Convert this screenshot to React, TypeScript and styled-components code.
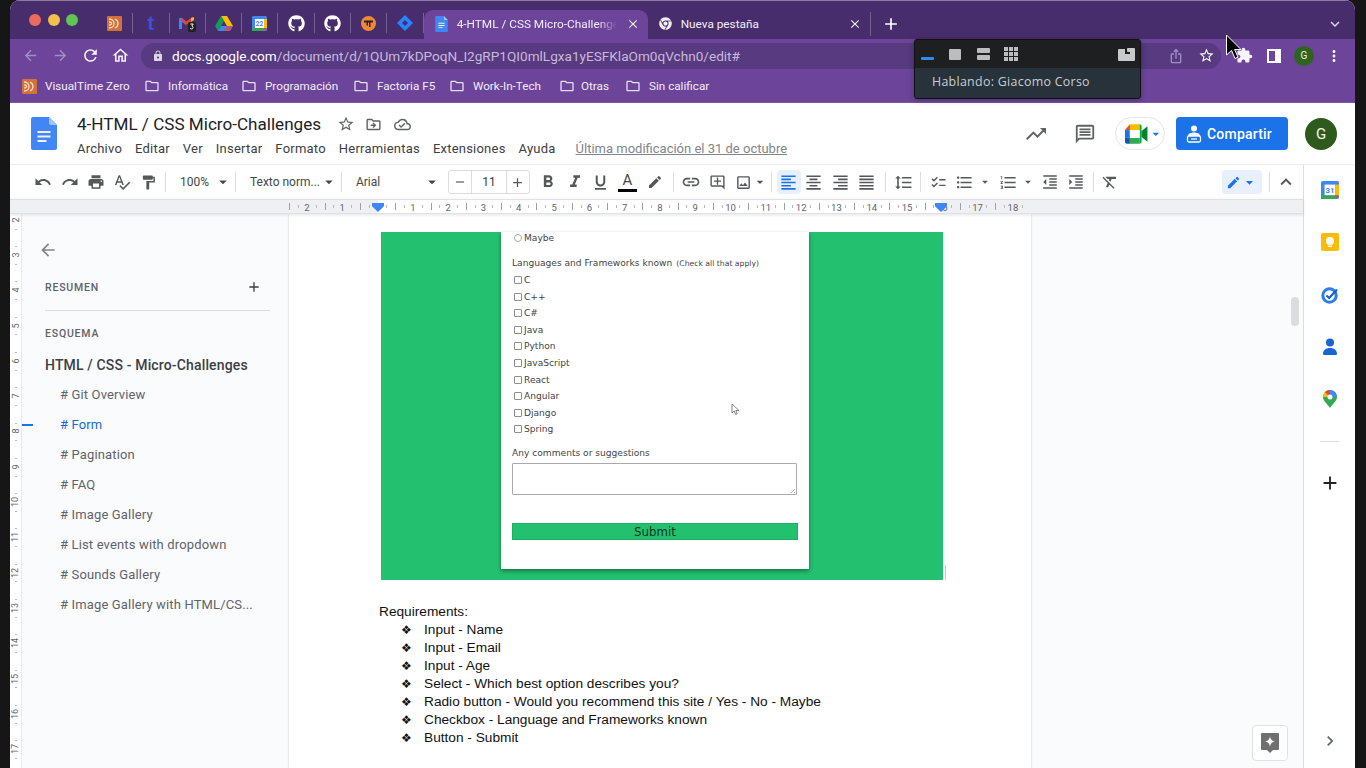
import React from "react";
import styled, { createGlobalStyle } from "styled-components";
import { FaChrome, FaGithub } from "react-icons/fa";
import {
  MdAdd, MdOutlineAddComment, MdArrowBack, MdArrowDropDown, MdArrowForward, MdChecklist, MdChevronRight, MdClose,
  MdEdit, MdExtension, MdFormatAlignCenter, MdFormatAlignJustify, MdFormatAlignLeft, MdFormatAlignRight,
  MdFormatBold, MdFormatClear, MdFormatIndentDecrease, MdFormatIndentIncrease, MdFormatItalic,
  MdFormatLineSpacing, MdFormatListBulleted, MdFormatListNumbered, MdFormatPaint, MdFormatUnderlined,
  MdKeyboardArrowDown, MdKeyboardArrowUp, MdLink, MdLock, MdMoreVert, MdOutlineCloudDone,
  MdOutlineDriveFileMove, MdOutlineFolder, MdOutlineHome, MdOutlineImage, MdOutlineMessage, MdPrint,
  MdRedo, MdRefresh, MdRemove, MdTrendingUp, MdSpellcheck, MdStarBorder, MdUndo, MdIosShare,
} from "react-icons/md";

const GlobalStyle = createGlobalStyle`
  html, body { margin: 0; padding: 0; background: #161616; overflow: hidden; }
  * { box-sizing: border-box; }
`;

const UI_FONT = `Roboto, "Liberation Sans", sans-serif`;
const FORM_FONT = `"DejaVu Sans", sans-serif`;
const DOC_FONT = `"Liberation Sans", Arial, sans-serif`;
const ICON_GREY = "#555759";

const Shell = styled.div`
  position: relative;
  width: 1366px;
  height: 768px;
  padding: 0 11px 0 10px;
  overflow: hidden;
  background: #161616;
  font-family: ${UI_FONT};
`;

const Window = styled.div`
  display: flex;
  flex-direction: column;
  height: 768px;
  overflow: hidden;
  background: #fff;
  border-radius: 10px 10px 0 0;
`;

const TabStrip = styled.div`
  display: flex;
  align-items: flex-end;
  flex: none;
  height: 39px;
  background: #482d6c;
  border-top: 1px solid #8d7aa5;
  color: #fff;
`;

const Lights = styled.div`
  display: flex;
  gap: 6.5px;
  align-self: flex-start;
  width: 87px;
  padding: 13px 0 0 19px;
`;

const Light = styled.span<{ $color: string }>`
  width: 12px;
  height: 12px;
  border-radius: 50%;
  background: ${(p) => p.$color};
`;

const Pinned = styled.div`
  display: flex;
  align-items: center;
  justify-content: center;
  align-self: flex-start;
  width: 36.3px;
  height: 20px;
  margin-top: 12px;
  border-right: 1px solid #75608f;
  &:last-of-type { border-right: none; }
`;

const Tab = styled.div<{ $active?: boolean; $w: number }>`
  display: flex;
  align-items: center;
  gap: 9px;
  flex: none;
  width: ${(p) => p.$w}px;
  height: 29px;
  padding: 0 8px 2px 11px;
  border-radius: 9px 9px 0 0;
  background: ${(p) => (p.$active ? "#6c459b" : "transparent")};
  font-size: 11.8px;
  color: #f1edf6;
`;

const TabTitle = styled.span<{ $fade?: boolean }>`
  flex: 1;
  overflow: hidden;
  white-space: nowrap;
  ${(p) => p.$fade && "mask-image: linear-gradient(to right, #000 88%, transparent);"}
`;

const NewTab = styled.div`
  display: flex;
  align-items: center;
  justify-content: center;
  width: 42px;
  height: 24px;
  margin-bottom: 3px;
  border-left: 1px solid #75608f;
`;

const StripEnd = styled.div`
  display: flex;
  align-items: center;
  justify-content: flex-end;
  flex: 1;
  height: 29px;
  padding: 0 11px 2px 0;
  color: #ddd6e6;
`;

const NavBar = styled.div`
  display: flex;
  align-items: center;
  flex: none;
  height: 33px;
  padding-left: 5px;
  background: #6c459b;
  color: #f2eef7;
`;

const NavBtn = styled.div<{ $dim?: boolean; $w?: number }>`
  display: flex;
  align-items: center;
  justify-content: center;
  flex: none;
  width: ${(p) => p.$w ?? 30}px;
  color: ${(p) => (p.$dim ? "#a48fc2" : "#f6f3fa")};
`;

const Omnibox = styled.div`
  display: flex;
  align-items: center;
  width: 1080px;
  height: 26px;
  margin: 0 8px 0 6px;
  padding-left: 11px;
  border-radius: 13px;
  background: #573a80;
  font-size: 13.6px;
  color: #c7b9da;
`;

const UrlHost = styled.span`
  margin-left: 8px;
  color: #fff;
`;

const OmniEnd = styled.div`
  display: flex;
  margin-left: auto;
`;

const Profile = styled.div`
  display: flex;
  align-items: center;
  justify-content: center;
  flex: none;
  width: 20px;
  height: 20px;
  margin: 0 5px;
  border-radius: 50%;
  background: #2f6320;
  font-size: 10px;
  color: #e8f0e4;
`;

const Bookmarks = styled.div`
  display: flex;
  align-items: center;
  flex: none;
  height: 31px;
  padding: 0 0 2px 12px;
  background: #6c459b;
  border-bottom: 1px solid #7a55a8;
  font-size: 11.7px;
  color: #f1edf6;
`;

const Bookmark = styled.div<{ $w: number }>`
  display: flex;
  align-items: center;
  gap: 8px;
  width: ${(p) => p.$w}px;
  white-space: nowrap;
`;

const BookmarkTight = styled(Bookmark)`
  gap: 6px;
`;

const DocsHeader = styled.div`
  display: flex;
  align-items: center;
  flex: none;
  height: 62px;
  padding: 0 18px 0 21px;
  border-bottom: 1px solid #eceef1;
`;

const TitleBlock = styled.div`
  display: flex;
  flex-direction: column;
  gap: 4px;
  margin-left: 20px;
  padding-top: 3px;
`;

const TitleRow = styled.div`
  display: flex;
  align-items: center;
  gap: 9px;
  color: #5f6368;
`;

const DocTitle = styled.span`
  width: 251px;
  font-size: 17.1px;
  line-height: 23px;
  white-space: nowrap;
  color: #202124;
`;

const MenuRow = styled.div`
  display: flex;
  gap: 13px;
  font-size: 13px;
  line-height: 18px;
  color: #3c4043;
  letter-spacing: 0.22px;
`;

const LastEdit = styled.span`
  margin-left: 7px;
  letter-spacing: 0;
  color: #80868b;
  text-decoration: underline;
`;

const HeaderEnd = styled.div`
  display: flex;
  align-items: center;
  margin-left: auto;
  color: #5f6368;
`;

const MeetPill = styled.div`
  display: flex;
  align-items: center;
  width: 50px;
  height: 33px;
  margin: 0 11px 0 19px;
  padding-left: 9px;
  border: 1px solid #e3e5e8;
  border-radius: 17px;
  color: #1a73e8;
`;

const ShareBtn = styled.div`
  display: flex;
  align-items: center;
  justify-content: center;
  gap: 5px;
  width: 112px;
  height: 33px;
  padding-right: 6px;
  border-radius: 4px;
  background: #1a73e8;
  font-size: 14px;
  font-weight: 500;
  letter-spacing: 0.2px;
  color: #fff;
`;

const DocAvatar = styled.div`
  display: flex;
  align-items: center;
  justify-content: center;
  width: 32px;
  height: 32px;
  margin-left: 17px;
  border-radius: 50%;
  background: #2f5a1e;
  font-size: 15px;
  color: #f0f4ee;
`;

const Below = styled.div`
  display: flex;
  flex: 1;
  min-height: 0;
`;

const Workspace = styled.div`
  display: flex;
  flex-direction: column;
  flex: 1;
  min-width: 0;
`;

const Toolbar = styled.div`
  display: flex;
  align-items: center;
  flex: none;
  height: 34px;
  padding: 0 4px 0 20px;
  font-size: 12px;
  color: ${ICON_GREY};
`;

const ToolBtn = styled.div<{ $w?: number; $active?: boolean; $ml?: number }>`
  display: flex;
  align-items: center;
  justify-content: center;
  flex: none;
  width: ${(p) => p.$w ?? 26.4}px;
  height: 24px;
  margin-left: ${(p) => p.$ml ?? 0}px;
  border-radius: 4px;
  background: ${(p) => (p.$active ? "#e8f0fe" : "transparent")};
  color: ${(p) => (p.$active ? "#1a73e8" : ICON_GREY)};
`;

const Sep = styled.div<{ $ml?: number; $mr?: number }>`
  flex: none;
  width: 1px;
  height: 20px;
  margin: 0 ${(p) => p.$mr ?? 0}px 0 ${(p) => p.$ml ?? 0}px;
  background: #dadce0;
`;

const Picker = styled.div<{ $w: number }>`
  display: flex;
  align-items: center;
  justify-content: space-between;
  flex: none;
  width: ${(p) => p.$w}px;
  padding: 0 3px 0 14px;
  white-space: nowrap;
  color: #444746;
`;

const Stepper = styled.div`
  display: flex;
  align-items: center;
  flex: none;
  width: 82px;
  height: 24px;
  margin-left: 4px;
  border: 1px solid #dadce0;
  border-radius: 3px;
`;

const StepBtn = styled.div`
  display: flex;
  align-items: center;
  justify-content: center;
  width: 22px;
  height: 100%;
`;

const StepValue = styled.div`
  flex: 1;
  height: 100%;
  border: solid #dadce0;
  border-width: 0 1px;
  line-height: 22px;
  text-align: center;
  color: #3c4043;
`;

const TextColor = styled.div`
  display: flex;
  flex-direction: column;
  align-items: center;
  width: 19px;
  font-size: 15px;
  line-height: 17px;
  color: #444746;
  border-bottom: 3px solid #000;
`;

const EditMode = styled.div`
  display: flex;
  align-items: center;
  justify-content: center;
  flex: none;
  width: 40px;
  height: 24px;
  margin-left: auto;
  border-radius: 4px;
  background: #e8f0fe;
  color: #1a73e8;
`;

const HRuler = styled.div`
  position: relative;
  display: flex;
  flex: none;
  height: 15px;
  padding: 0 0 0 279.35px;
  overflow: hidden;
  border-top: 1px solid #dfe1e5;
  border-bottom: 1px solid #dfe1e5;
  background: linear-gradient(to right, #eef0f3 368px, #fff 368px, #fff 931px, #eef0f3 931px);
  box-shadow: 0 1px 3px rgba(60, 64, 67, 0.15);
  z-index: 2;
`;

const RulerCell = styled.div`
  flex: none;
  width: 35.3px;
  height: 13px;
  font-size: 9.5px;
  line-height: 15px;
  text-align: center;
  color: #5f6368;
  background:
    linear-gradient(#9aa0a6, #9aa0a6) 0 3px / 1px 7px no-repeat,
    linear-gradient(#b4b8bd, #b4b8bd) 8.8px 5px / 1px 3px no-repeat,
    linear-gradient(#b4b8bd, #b4b8bd) 26.5px 5px / 1px 3px no-repeat;
`;

const IndentMark = styled.div<{ $left: number }>`
  position: absolute;
  top: 3px;
  left: ${(p) => p.$left}px;
  width: 12px;
  height: 9px;
  background: #4285f4;
  clip-path: polygon(0 0, 100% 0, 100% 35%, 50% 100%, 0 35%);
`;

const Content = styled.div`
  position: relative;
  display: flex;
  flex: 1;
  min-height: 0;
  overflow: hidden;
  background: #f9fbfd;
`;

const VRuler = styled.div`
  flex: none;
  width: 12px;
  overflow: hidden;
  background: #fff;
  border-right: 1px solid #e8eaed;
`;

const VCell = styled.div`
  display: flex;
  align-items: center;
  justify-content: center;
  height: 35.3px;
  font-size: 9px;
  color: #5f6368;
  background:
    linear-gradient(#9aa0a6, #9aa0a6) 3px 17.6px / 6px 1px no-repeat,
    linear-gradient(#b4b8bd, #b4b8bd) 5px 8.8px / 2px 1px no-repeat,
    linear-gradient(#b4b8bd, #b4b8bd) 5px 26.5px / 2px 1px no-repeat;
  &:first-child { margin-top: -12px; }
`;

const VLabel = styled.span`
  transform: rotate(-90deg);
  background: #fff;
  padding: 0 1px;
`;

const Outline = styled.aside`
  position: relative;
  display: flex;
  flex-direction: column;
  flex: none;
  width: 267px;
  padding: 26px 19px 0 23px;
  color: #5f6368;
`;

const BackRow = styled.div`
  height: 24px;
  margin-left: -7px;
  color: #80868b;
`;

const SectionRow = styled.div`
  display: flex;
  align-items: center;
  justify-content: space-between;
  height: 18px;
  margin-top: 14px;
  padding-right: 8px;
  font-size: 10.5px;
  font-weight: 500;
  letter-spacing: 0.8px;
  color: #5f6368;
`;

const Divider = styled.div`
  height: 1px;
  margin-top: 14px;
  background: #dadce0;
`;

const SectionTitle = styled(SectionRow)`
  margin-top: 13px;
`;

const OutlineHeading = styled.div`
  margin-top: 13px;
  font-size: 14px;
  line-height: 20px;
  font-weight: 500;
  letter-spacing: 0.15px;
  color: #3c4043;
`;

const OutlineItem = styled.div<{ $active?: boolean }>`
  position: relative;
  height: 30px;
  padding: 5px 0 0 15px;
  font-size: 13px;
  line-height: 20px;
  letter-spacing: 0.15px;
  white-space: nowrap;
  color: ${(p) => (p.$active ? "#1967d2" : "#5f6368")};
  ${(p) =>
    p.$active &&
    `&::before {
      content: "";
      position: absolute;
      top: 14px;
      left: -23px;
      width: 11px;
      height: 1.5px;
      background: #1a73e8;
    }`}
`;

const OutlineList = styled.div`
  margin-top: 5px;
`;

const Page = styled.main`
  flex: none;
  width: 742px;
  height: 100%;
  padding: 18px 0 0 90px;
  background: #fff;
  box-shadow: 0 0 2px rgba(60, 64, 67, 0.25);
`;

const GreenImage = styled.div`
  position: relative;
  width: 562px;
  height: 348px;
  margin-left: 2px;
  padding-left: 120px;
  background: #22c06f;
  &::after {
    content: "";
    position: absolute;
    right: -3px;
    bottom: 0;
    width: 1px;
    height: 15px;
    background: #c5c7ca;
  }
`;

const FormCard = styled.div`
  position: relative;
  width: 308px;
  height: 337px;
  padding: 0 11px;
  background: #fff;
  box-shadow: 0 2px 4px rgba(0, 0, 0, 0.4);
  font-family: ${FORM_FONT};
  font-size: 9.1px;
  color: #444;
`;

const Choice = styled.div`
  display: flex;
  align-items: center;
  gap: 2px;
  height: 16.55px;
  padding-left: 2px;
`;

const Radio = styled.span`
  width: 8px;
  height: 8px;
  border: 1px solid #a8a8a8;
  border-radius: 50%;
`;

const Check = styled.span`
  width: 8px;
  height: 8px;
  border: 1px solid #8d8d8d;
  border-radius: 1px;
`;

const FieldLabel = styled.div<{ $mt: number; $mb: number }>`
  margin: ${(p) => p.$mt}px 0 ${(p) => p.$mb}px;
  line-height: 14px;
`;

const Hint = styled.span`
  font-size: 7.7px;
  margin-left: 4px;
`;

const Comments = styled.div`
  position: relative;
  width: 285px;
  height: 32px;
  border: 1px solid #aaa;
  border-radius: 1px;
  &::after {
    content: "";
    position: absolute;
    right: 1px;
    bottom: 1px;
    width: 5px;
    height: 5px;
    background: linear-gradient(135deg, transparent 50%, #b5b5b5 50%, #b5b5b5 65%, transparent 65%, transparent 80%, #b5b5b5 80%);
  }
`;

const Submit = styled.div`
  width: 286px;
  height: 17px;
  margin-top: 28px;
  border: 1px solid #1db065;
  background: #22c06f;
  font-size: 11.8px;
  line-height: 16px;
  text-align: center;
  color: #0a3a20;
`;

const InnerCursor = styled.svg`
  position: absolute;
  top: 171px;
  left: 230px;
`;

const Requirements = styled.div`
  margin: 22.500px 0 0 0;
  font-family: ${DOC_FONT};
  font-size: 13.7px;
  line-height: 18.1px;
  color: #111;
`;

const Req = styled.div`
  display: flex;
  padding-left: 22px;
`;

const ReqBullet = styled.span`
  width: 23px;
  font-family: "DejaVu Sans", sans-serif;
  font-size: 12px;
`;

const Scrollbar = styled.div`
  position: absolute;
  top: 83px;
  right: 4px;
  width: 8px;
  height: 29px;
  border-radius: 4px;
  background: #dadce0;
`;

const ExploreBtn = styled.div`
  position: absolute;
  right: 15px;
  bottom: 7px;
  display: flex;
  align-items: center;
  justify-content: center;
  width: 36px;
  height: 36px;
  border: 1px solid #dfe1e5;
  border-radius: 4px;
  background: #fff;
`;

const Rail = styled.aside`
  display: flex;
  flex-direction: column;
  align-items: center;
  flex: none;
  width: 52px;
  padding: 13px 0 0 0;
  border-left: 1px solid #dadce0;
  color: #202124;
`;

const RailSlot = styled.div`
  display: flex;
  align-items: center;
  justify-content: center;
  width: 24px;
  height: 24px;
  margin-bottom: 28.300px;
`;

const RailRule = styled.div`
  width: 19px;
  height: 1px;
  margin: 1.500px 0 29px;
  background: #dadce0;
`;

const RailEnd = styled.div`
  display: flex;
  margin-top: auto;
  margin-bottom: 17px;
  color: #5f6368;
`;

const SpeakerPanel = styled.div`
  position: absolute;
  top: 39px;
  left: 914px;
  width: 227px;
  height: 60px;
  overflow: hidden;
  border-radius: 3px;
  border: 1px solid #111;
  background: #27323a;
  box-shadow: 0 1px 6px rgba(0, 0, 0, 0.3);
  z-index: 5;
`;

const SpeakerBar = styled.div`
  display: flex;
  align-items: center;
  height: 28px;
  padding: 0 4px 0 6px;
  background: #1d1f21;
`;

const SpeakerText = styled.div`
  padding: 5px 0 0 17px;
  font-family: "Open Sans", ${UI_FONT};
  font-size: 12.4px;
  line-height: 18px;
  letter-spacing: 0.3px;
  color: #c9ced2;
`;

const LayoutGlyph = styled.svg<{ $ml: number }>`
  flex: none;
  margin-left: ${(p) => p.$ml}px;
`;

const MouseCursor = styled.svg`
  position: absolute;
  top: 34px;
  left: 1225px;
  z-index: 6;
`;

const BrandT = styled.span`
  font-family: "Liberation Sans", sans-serif;
  font-size: 20px;
  font-weight: 700;
  line-height: 20px;
  color: #3c50e0;
`;

const VtIcon = ({ size = 15 }: { size?: number }) => (
  <svg width={size} height={size} viewBox="0 0 15 15">
    <rect width="15" height="15" rx="1" fill="#d4703a" />
    <path d="M2 3c3 0 5 2 5 4.500S5 12 2 12M2 6c1.500 0 2.500.7 2.500 1.500S3.500 9 2 9M8 3c2 1 3 2.500 3 4.500S10 11 8 12" fill="none" stroke="#f6dcc6" strokeWidth="1.300" />
  </svg>
);

const GmailIcon = () => (
  <svg width="18" height="18" viewBox="0 0 18 18">
    <path d="M1 4.500V15h3V8l4 3V8L3 3.500Z" fill="#4285f4" />
    <path d="M4 4l4.500 3.500L13 4l1.500-1-.2 3.500-5.800 4.300L3 6.500Z" fill="#ea4335" />
    <path d="M13 4l3-1v3l-3 2Z" fill="#fbbc04" />
    <rect x="10" y="8" width="8" height="10" rx="2" fill="#1f1f1f" />
    <path d="M12.300 10h3l-1.500 2c1.500 0 1.800 3-.2 3-.8 0-1.300-.4-1.500-1" fill="none" stroke="#fff" strokeWidth="1" />
  </svg>
);

const DriveIcon = () => (
  <svg width="18" height="16" viewBox="0 0 18 16">
    <path d="M6 1h6l6 10h-6Z" fill="#fbbc04" />
    <path d="M6 1 0 11l3 5 6-10Z" fill="#0f9d58" />
    <path d="M3 16h12l3-5H6Z" fill="#4285f4" />
    <path d="M12 11h6l-3 5H9Z" fill="#ea4335" opacity=".7" />
  </svg>
);

const CalendarIcon = ({ label, size = 15 }: { label: string; size?: number }) => (
  <svg width={size} height={size} viewBox="0 0 15 15">
    <rect width="15" height="15" rx="1.500" fill="#4285f4" />
    <rect x="3" y="3" width="9" height="9" fill="#fff" />
    <rect x="12" y="3" width="3" height="9" fill="#fbbc04" />
    <rect y="12" width="12" height="3" fill="#34a853" />
    <path d="M12 12h3l-3 3Z" fill="#ea4335" />
    <text x="7.500" y="10" fontSize="6.500" fontWeight="700" textAnchor="middle" fill="#4285f4" fontFamily="Roboto, sans-serif">{label}</text>
  </svg>
);

const OrangeBadge = () => (
  <svg width="15" height="15" viewBox="0 0 15 15">
    <circle cx="7.500" cy="7.500" r="7.500" fill="#ee8a2f" />
    <path d="M3 4.500h9v2H9.500V11H8V6.500H7V9.500H5.500v-3H3Z" fill="#2a2030" />
  </svg>
);

const JiraIcon = () => (
  <svg width="16" height="16" viewBox="0 0 16 16">
    <path d="M8 0 16 8l-8 8-8-8Z" fill="#2684ff" />
    <path d="M8 5 11 8 8 11 5 8Z" fill="#482d6c" />
  </svg>
);

const DocsGlyph = ({ w, h }: { w: number; h: number }) => (
  <svg width={w} height={h} viewBox="0 0 26 33">
    <path d="M2 0h16l8 8v23a2 2 0 0 1-2 2H2a2 2 0 0 1-2-2V2a2 2 0 0 1 2-2Z" fill="#4285f4" />
    <path d="M18 0l8 8h-6a2 2 0 0 1-2-2Z" fill="#a1c2fa" />
    <path d="M6.500 14h13v2h-13ZM6.500 18.500h13v2h-13ZM6.500 23h9v2h-9Z" fill="#f1f1f1" />
  </svg>
);

const MeetIcon = () => (
  <svg width="24" height="20" viewBox="0 0 24 20">
    <path d="M5 0h10v6H5Z" fill="#fbbc04" />
    <path d="M5 0v6H0Z" fill="#ea4335" />
    <path d="M0 6h5v8H0Z" fill="#1a73e8" />
    <path d="M0 14h5v6H2a2 2 0 0 1-2-2Z" fill="#1557b0" />
    <path d="M5 14h10v6H5Z" fill="#34a853" />
    <path d="M15 0a2 2 0 0 1 2 2v16a2 2 0 0 1-2 2Z" fill="#00ac47" />
    <path d="M17 7l6-5v16l-6-5Z" fill="#00832d" />
    <rect x="5" y="6" width="10" height="8" fill="#fff" />
  </svg>
);

const ShareGlyph = () => (
  <svg width="16" height="18" viewBox="0 0 16 18">
    <circle cx="8" cy="3.500" r="3" fill="#fff" />
    <path d="M2 11c0-2.500 3-3.500 6-3.500s6 1 6 3.500Z" fill="#fff" />
    <rect x="1.500" y="11" width="13" height="6" rx="1.500" fill="none" stroke="#fff" strokeWidth="1.300" />
    <path d="M5 14h6" stroke="#fff" strokeWidth="1.300" />
  </svg>
);

const KeepIcon = () => (
  <svg width="18" height="18" viewBox="0 0 18 18">
    <rect width="18" height="18" rx="2" fill="#fbbc04" />
    <circle cx="9" cy="8" r="4" fill="#fff" />
    <rect x="7" y="12.500" width="4" height="1.500" fill="#fff" />
  </svg>
);

const TasksIcon = () => (
  <svg width="18" height="18" viewBox="0 0 18 18">
    <circle cx="8.500" cy="9.500" r="6.700" fill="none" stroke="#2b7de9" strokeWidth="3" />
    <path d="M5.500 9.500l2.700 2.500L16 3.500" fill="none" stroke="#1a5fc8" strokeWidth="2.200" />
  </svg>
);

const ContactsIcon = () => (
  <svg width="16" height="18" viewBox="0 0 16 18">
    <circle cx="8" cy="4.500" r="4" fill="#1a63d2" />
    <path d="M1 16c0-4 3-6 7-6s7 2 7 6a1 1 0 0 1-1 1H2a1 1 0 0 1-1-1Z" fill="#1a63d2" />
  </svg>
);

const MapsIcon = () => (
  <svg width="14" height="18" viewBox="0 0 14 18">
    <path d="M7 0a7 7 0 0 1 7 7c0 4-4.500 7-7 11C4.500 14 0 11 0 7a7 7 0 0 1 7-7Z" fill="#34a853" />
    <path d="M2 2 7 7 0 7a7 7 0 0 1 2-5Z" fill="#fbbc04" />
    <path d="M2 2a7 7 0 0 1 5-2v7Z" fill="#ea4335" />
    <path d="M7 0a7 7 0 0 1 7 7H7Z" fill="#4285f4" />
    <circle cx="7" cy="7" r="2.500" fill="#fff" />
  </svg>
);

const ExploreGlyph = () => (
  <svg width="18" height="20" viewBox="0 0 18 20">
    <path d="M1 0h16a1 1 0 0 1 1 1v15a1 1 0 0 1-1 1h-5l-3 3-3-3H1a1 1 0 0 1-1-1V1a1 1 0 0 1 1-1Z" fill="#6f6f6f" />
    <path d="M9 3.500c.6 3 2 4.400 5 5-3 .6-4.400 2-5 5-.6-3-2-4.400-5-5 3-.6 4.400-2 5-5Z" fill="#fff" />
  </svg>
);

const pinnedIcons = [
  <VtIcon key="vt" />,
  <BrandT key="t">t</BrandT>,
  <GmailIcon key="gm" />,
  <DriveIcon key="dr" />,
  <CalendarIcon key="cal" label="22" />,
  <FaGithub key="gh1" size={17} color="#fff" />,
  <FaGithub key="gh2" size={17} color="#fff" />,
  <OrangeBadge key="or" />,
  <JiraIcon key="ji" />,
];

const bookmarks = [
  { label: "Informática", w: 97 },
  { label: "Programación", w: 112 },
  { label: "Factoria F5", w: 96 },
  { label: "Work-In-Tech", w: 110 },
  { label: "Otras", w: 66 },
  { label: "Sin calificar", w: 90 },
];

const menus = ["Archivo", "Editar", "Ver", "Insertar", "Formato", "Herramientas", "Extensiones", "Ayuda"];
const rulerLabels = ["2", "1", "", ...Array.from({ length: 18 }, (_, i) => String(i + 1))];
const verticalLabels = Array.from({ length: 16 }, (_, i) => String(i + 2));
const outlineItems = ["# Git Overview", "# Form", "# Pagination", "# FAQ", "# Image Gallery", "# List events with dropdown", "# Sounds Gallery", "# Image Gallery with HTML/CS..."];
const languages = ["C", "C++", "C#", "Java", "Python", "JavaScript", "React", "Angular", "Django", "Spring"];
const requirements = [
  "Input - Name",
  "Input - Email",
  "Input - Age",
  "Select - Which best option describes you?",
  "Radio button - Would you recommend this site / Yes - No - Maybe",
  "Checkbox - Language and Frameworks known",
  "Button - Submit",
];

const App: React.FC = () => {
  return (
    <Shell>
      <GlobalStyle />
      <Window>
        <TabStrip>
          <Lights>
            <Light $color="#ed6a5e" />
            <Light $color="#f4bf4f" />
            <Light $color="#61c554" />
          </Lights>
          {pinnedIcons.map((icon) => (
            <Pinned key={icon.key}>{icon}</Pinned>
          ))}
          <Tab $active $w={224}>
            <DocsGlyph w={13} h={16} />
            <TabTitle $fade>4-HTML / CSS Micro-Challenges</TabTitle>
            <MdClose size={14} />
          </Tab>
          <Tab $w={222}>
            <FaChrome size={13} />
            <TabTitle>Nueva pestaña</TabTitle>
            <MdClose size={14} />
          </Tab>
          <NewTab>
            <MdAdd size={20} />
          </NewTab>
          <StripEnd>
            <MdKeyboardArrowDown size={18} />
          </StripEnd>
        </TabStrip>

        <NavBar>
          <NavBtn $dim><MdArrowBack size={17} /></NavBtn>
          <NavBtn $dim><MdArrowForward size={17} /></NavBtn>
          <NavBtn><MdRefresh size={19} /></NavBtn>
          <NavBtn><MdOutlineHome size={19} /></NavBtn>
          <Omnibox>
            <MdLock size={12} color="#ddd5e8" />
            <UrlHost>docs.google.com</UrlHost>/document/d/1QUm7kDPoqN_I2gRP1QI0mlLgxa1yESFKlaOm0qVchn0/edit#
            <OmniEnd>
              <NavBtn $dim><MdIosShare size={16} /></NavBtn>
              <NavBtn><MdStarBorder size={17} /></NavBtn>
            </OmniEnd>
          </Omnibox>
          <NavBtn><MdExtension size={17} /></NavBtn>
          <NavBtn>
            <svg width="14" height="14" viewBox="0 0 14 14">
              <rect x="1" y="1" width="12" height="12" fill="none" stroke="#fff" strokeWidth="2" />
              <rect x="8" y="1" width="5" height="12" fill="#fff" />
            </svg>
          </NavBtn>
          <Profile>G</Profile>
          <NavBtn><MdMoreVert size={18} /></NavBtn>
        </NavBar>

        <Bookmarks>
          <Bookmark $w={122}>
            <VtIcon />
            VisualTime Zero
          </Bookmark>
          {bookmarks.map((b) =>
            b.label === "Otras" ? (
              <BookmarkTight key={b.label} $w={b.w}>
                <MdOutlineFolder size={16} color="#e5deee" />
                {b.label}
              </BookmarkTight>
            ) : (
              <Bookmark key={b.label} $w={b.w}>
                <MdOutlineFolder size={16} color="#e5deee" />
                {b.label}
              </Bookmark>
            )
          )}
        </Bookmarks>

        <DocsHeader>
          <DocsGlyph w={26} h={33} />
          <TitleBlock>
            <TitleRow>
              <DocTitle>4-HTML / CSS Micro-Challenges</DocTitle>
              <MdStarBorder size={18} />
              <MdOutlineDriveFileMove size={17} style={{ marginLeft: 1 }} />
              <MdOutlineCloudDone size={17} style={{ marginLeft: 3 }} />
            </TitleRow>
            <MenuRow>
              {menus.map((m) => (
                <span key={m}>{m}</span>
              ))}
              <LastEdit>Última modificación el 31 de octubre</LastEdit>
            </MenuRow>
          </TitleBlock>
          <HeaderEnd>
            <MdTrendingUp size={24} style={{ marginRight: 26 }} />
            <MdOutlineMessage size={22} />
            <MeetPill>
              <MeetIcon />
              <MdArrowDropDown size={16} />
            </MeetPill>
            <ShareBtn>
              <ShareGlyph />
              Compartir
            </ShareBtn>
            <DocAvatar>G</DocAvatar>
          </HeaderEnd>
        </DocsHeader>

        <Below>
          <Workspace>
            <Toolbar>
              <ToolBtn><MdUndo size={18} /></ToolBtn>
              <ToolBtn><MdRedo size={18} /></ToolBtn>
              <ToolBtn><MdPrint size={18} /></ToolBtn>
              <ToolBtn><MdSpellcheck size={18} /></ToolBtn>
              <ToolBtn><MdFormatPaint size={17} /></ToolBtn>
              <Sep $ml={3} />
              <Picker $w={69}>100%<MdArrowDropDown size={18} /></Picker>
              <Sep />
              <Picker $w={105}>Texto norm...<MdArrowDropDown size={18} /></Picker>
              <Sep />
              <Picker $w={102}>Arial<MdArrowDropDown size={18} /></Picker>
              <Stepper>
                <StepBtn><MdRemove size={14} /></StepBtn>
                <StepValue>11</StepValue>
                <StepBtn><MdAdd size={15} /></StepBtn>
              </Stepper>
              <ToolBtn $ml={5}><MdFormatBold size={20} /></ToolBtn>
              <ToolBtn><MdFormatItalic size={20} /></ToolBtn>
              <ToolBtn><MdFormatUnderlined size={19} /></ToolBtn>
              <ToolBtn><TextColor>A</TextColor></ToolBtn>
              <ToolBtn $ml={1}><MdEdit size={16} /></ToolBtn>
              <Sep $ml={5} />
              <ToolBtn $ml={4}><MdLink size={20} /></ToolBtn>
              <ToolBtn><MdOutlineAddComment size={17} /></ToolBtn>
              <ToolBtn $w={37}><MdOutlineImage size={17} /><MdArrowDropDown size={16} style={{ margin: "0 -4px 0 0" }} /></ToolBtn>
              <Sep $ml={3} />
              <ToolBtn $active $ml={5} $w={24}><MdFormatAlignLeft size={19} /></ToolBtn>
              <ToolBtn><MdFormatAlignCenter size={19} /></ToolBtn>
              <ToolBtn><MdFormatAlignRight size={19} /></ToolBtn>
              <ToolBtn><MdFormatAlignJustify size={19} /></ToolBtn>
              <Sep $ml={5} />
              <ToolBtn $ml={4}><MdFormatLineSpacing size={19} /></ToolBtn>
              <Sep $ml={4} />
              <ToolBtn $ml={4}><MdChecklist size={17} /></ToolBtn>
              <ToolBtn><MdFormatListBulleted size={19} /></ToolBtn>
              <ToolBtn $w={14}><MdArrowDropDown size={16} /></ToolBtn>
              <ToolBtn $ml={3}><MdFormatListNumbered size={19} /></ToolBtn>
              <ToolBtn $w={14}><MdArrowDropDown size={16} /></ToolBtn>
              <ToolBtn $ml={1}><MdFormatIndentDecrease size={18} /></ToolBtn>
              <ToolBtn><MdFormatIndentIncrease size={18} /></ToolBtn>
              <Sep $ml={4} />
              <ToolBtn $ml={3}><MdFormatClear size={18} /></ToolBtn>
              <EditMode><MdEdit size={15} /><MdArrowDropDown size={17} /></EditMode>
              <Sep $ml={7} $mr={3} />
              <ToolBtn><MdKeyboardArrowUp size={22} /></ToolBtn>
            </Toolbar>

            <HRuler>
              {rulerLabels.map((label, i) => (
                <RulerCell key={i}>{label}</RulerCell>
              ))}
              <IndentMark $left={362} />
              <IndentMark $left={925} />
            </HRuler>

            <Content>
              <VRuler>
                {verticalLabels.map((label) => (
                  <VCell key={label}><VLabel>{label}</VLabel></VCell>
                ))}
              </VRuler>

              <Outline>
                <BackRow><MdArrowBack size={20} /></BackRow>
                <SectionRow>RESUMEN<MdAdd size={16} color="#3c4043" /></SectionRow>
                <Divider />
                <SectionTitle>ESQUEMA</SectionTitle>
                <OutlineHeading>HTML / CSS - Micro-Challenges</OutlineHeading>
                <OutlineList>
                  {outlineItems.map((item) => (
                    <OutlineItem key={item} $active={item === "# Form"}>{item}</OutlineItem>
                  ))}
                </OutlineList>
              </Outline>

              <Page>
                <GreenImage>
                  <FormCard>
                    <Choice style={{ height: 12 }}><Radio />Maybe</Choice>
                    <FieldLabel $mt={12} $mb={1}>
                      Languages and Frameworks known<Hint>(Check all that apply)</Hint>
                    </FieldLabel>
                    {languages.map((lang) => (
                      <Choice key={lang}><Check />{lang}</Choice>
                    ))}
                    <FieldLabel $mt={9} $mb={3}>Any comments or suggestions</FieldLabel>
                    <Comments />
                    <Submit>Submit</Submit>
                    <InnerCursor width="9" height="13" viewBox="0 0 9 13">
                      <path d="M1 1v9l2.200-2 1.500 3.500 1.500-.7L4.800 7.500H8Z" fill="#fff" stroke="#666" strokeWidth=".8" />
                    </InnerCursor>
                  </FormCard>
                </GreenImage>
                <Requirements>
                  Requirements:
                  {requirements.map((r) => (
                    <Req key={r}>
                      <ReqBullet>❖</ReqBullet>
                      {r}
                    </Req>
                  ))}
                </Requirements>
              </Page>

              <Scrollbar />
              <ExploreBtn><ExploreGlyph /></ExploreBtn>
            </Content>
          </Workspace>

          <Rail>
            <RailSlot><CalendarIcon label="31" size={18} /></RailSlot>
            <RailSlot><KeepIcon /></RailSlot>
            <RailSlot><TasksIcon /></RailSlot>
            <RailSlot><ContactsIcon /></RailSlot>
            <RailSlot><MapsIcon /></RailSlot>
            <RailRule />
            <RailSlot><MdAdd size={22} /></RailSlot>
            <RailEnd><MdChevronRight size={20} /></RailEnd>
          </Rail>
        </Below>
      </Window>

      <SpeakerPanel>
        <SpeakerBar>
          <LayoutGlyph $ml={0} width="13" height="3" viewBox="0 0 13 3" style={{ marginTop: 8 }}>
            <rect width="13" height="3" rx="1" fill="#2d8cf0" />
          </LayoutGlyph>
          <LayoutGlyph $ml={15} width="12" height="11" viewBox="0 0 12 11">
            <rect width="12" height="11" rx="1" fill="#bdbdbd" />
          </LayoutGlyph>
          <LayoutGlyph $ml={16} width="13" height="12" viewBox="0 0 13 12">
            <rect width="13" height="5" rx="1" fill="#bdbdbd" />
            <rect y="7" width="13" height="5" rx="1" fill="#bdbdbd" />
          </LayoutGlyph>
          <LayoutGlyph $ml={14} width="14" height="14" viewBox="0 0 14 14">
            {[0, 5, 10].flatMap((y) => [0, 5, 10].map((x) => <rect key={`${x}-${y}`} x={x} y={y} width="4" height="4" fill="#bdbdbd" />))}
          </LayoutGlyph>
          <LayoutGlyph $ml={100} width="17" height="13" viewBox="0 0 17 13">
            <path d="M0 2a1 1 0 0 1 1-1h6v5h5V1h4a1 1 0 0 1 1 1v10a1 1 0 0 1-1 1H1a1 1 0 0 1-1-1Z" fill="#c9c9c9" />
            <rect x="9" width="8" height="4" rx="1" fill="#c9c9c9" />
          </LayoutGlyph>
        </SpeakerBar>
        <SpeakerText>Hablando: Giacomo Corso</SpeakerText>
      </SpeakerPanel>

      <MouseCursor width="18" height="28" viewBox="0 0 18 28">
        <path d="M1.500 1v20l5-4.500 3.500 8 3-1.300-3.400-7.700H16Z" fill="#000" stroke="#fff" strokeWidth="1" />
      </MouseCursor>
    </Shell>
  );
};

export default App;
